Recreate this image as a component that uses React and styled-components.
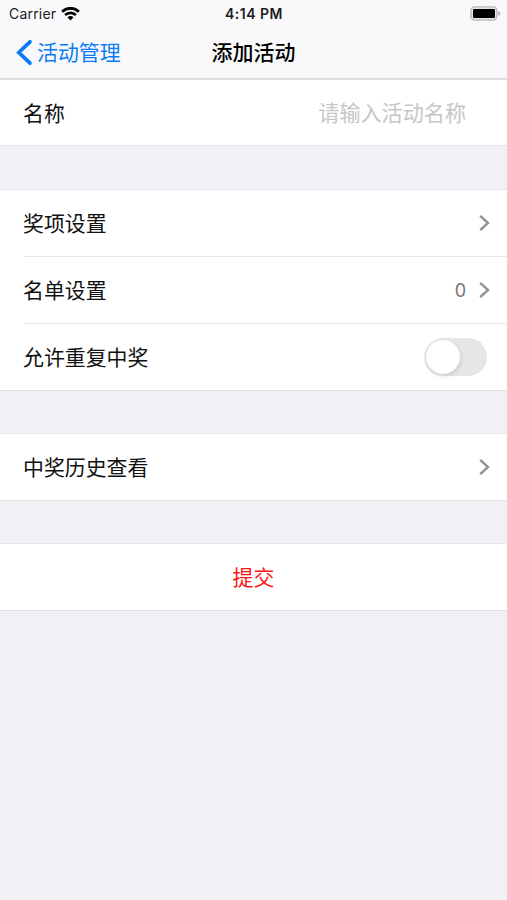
import React from 'react';
import styled, { createGlobalStyle } from 'styled-components';

const GlobalStyle = createGlobalStyle`
  * { box-sizing: border-box; }
  body {
    margin: 0;
    background: #f0f0f5;
    font-family: "Noto Sans CJK SC", sans-serif;
    color: #111;
  }
`;

const Screen = styled.main`
  height: 900px;
  background: #f0f0f5;
  overflow: hidden;
`;

const TopBar = styled.header`
  height: 80px;
  background: #f9f9fb;
  border-bottom: 2px solid #e0e0e3;
`;

const StatusBar = styled.div`
  height: 27px;
  padding: 0 6px 0 9px;
  display: grid;
  grid-template-columns: 1fr 60px 1fr;
  align-items: center;
  color: #1c1c1e;
`;

const Carrier = styled.div`
  display: flex;
  align-items: center;
  gap: 5px;
  font: 400 14px/20px Inter, sans-serif;
  letter-spacing: 0.2px;
`;

const Clock = styled.div`
  font: 600 14px/20px Inter, sans-serif;
  letter-spacing: 0.5px;
  white-space: nowrap;
`;

const BatterySlot = styled.div`
  display: flex;
  justify-content: flex-end;
`;

const NavBar = styled.nav`
  height: 51px;
  padding: 0 16px;
  display: grid;
  grid-template-columns: 1fr auto 1fr;
  align-items: center;
`;

const BackLink = styled.a`
  display: flex;
  align-items: center;
  gap: 4px;
  color: #0a7bf5;
  font-size: 20.9px;
  line-height: 30px;
`;

const BackText = styled.span`
  padding-bottom: 3px;
`;

const Title = styled.h1`
  margin: 0;
  padding-bottom: 3px;
  color: #000;
  font-size: 21px;
  font-weight: 500;
  line-height: 30px;
`;

const Group = styled.section`
  margin-bottom: ${(p) => (p.$first ? '43px' : '42px')};
  background: #fff;
  border-top: ${(p) => (p.$first ? '0' : '1px')} solid #e6e6e9;
  border-bottom: 1px solid #e2e2e5;
`;

const Row = styled.div`
  height: ${(p) => p.$height || 66}px;
  padding: 0 16px 0 23px;
  display: flex;
  align-items: center;
  justify-content: ${(p) => (p.$centered ? 'center' : 'space-between')};
`;

const Divider = styled.div`
  height: 1px;
  margin-left: 25px;
  background: #e6e6e8;
`;

const Label = styled.span`
  padding-bottom: 2px;
  font-size: 20.9px;
  line-height: 30px;
`;

const NameInput = styled.input`
  width: 200px;
  margin: 0 25px 2px 0;
  padding: 0;
  border: 0;
  outline: 0;
  background: transparent;
  text-align: right;
  font: 400 21.1px/30px "Noto Sans CJK SC", sans-serif;
  &::placeholder { color: #c6c6c8; opacity: 1; }
`;

const Trailing = styled.div`
  display: flex;
  align-items: center;
  gap: 13px;
`;

const Count = styled.span`
  padding-top: 1px;
  color: #757577;
  font: 400 18px/26px Inter, sans-serif;
`;

const Toggle = styled.button`
  width: 63px;
  height: 38px;
  margin-right: 4px;
  padding: 2px;
  display: flex;
  border: 0;
  border-radius: 19px;
  background: #e6e6e8;
`;

const Knob = styled.span`
  width: 34px;
  height: 34px;
  border-radius: 50%;
  background: #fff;
  box-shadow: 1px 2px 4px rgba(0, 0, 0, 0.12);
`;

const Submit = styled.button`
  border: 0;
  padding: 0;
  margin: 0 7px 2px 0;
  background: none;
  color: #fa1414;
  font: 400 20.9px/30px "Noto Sans CJK SC", sans-serif;
`;

const WifiIcon = () => (
  <svg width="19" height="14" viewBox="0 0 19 14" fill="none" stroke="#000" strokeWidth="2.7">
    <path d="M1.1 4.7C5.8.2 13.2.2 17.9 4.7" />
    <path d="M4.1 8C7.1 5.1 11.9 5.1 14.9 8" />
    <path d="M6.5 10.3C8.2 8.7 10.8 8.7 12.5 10.3L9.5 13.4Z" fill="#000" stroke="none" />
  </svg>
);

const BatteryIcon = () => (
  <svg width="31" height="15" viewBox="0 0 31 15">
    <rect x="0.9" y="0.9" width="26" height="13.2" rx="4" fill="#e4e4e6" stroke="#b8b8b9" strokeWidth="1.4" />
    <rect x="3" y="3" width="22" height="9" rx="1.3" fill="#000" />
    <path d="M28.4 5.2C30.8 6 30.8 9 28.4 9.8Z" fill="#aaa" />
  </svg>
);

const BackIcon = () => (
  <svg width="17" height="27" viewBox="0 0 17 27" fill="none" stroke="#0a7bf5" strokeWidth="3.7" strokeLinecap="round">
    <path d="M14 2.8L2.8 13.5L14 24.2" />
  </svg>
);

const Chevron = () => (
  <svg width="12" height="18" viewBox="0 0 12 18" fill="none" stroke="#929294" strokeWidth="2.4">
    <path d="M1.2 1.8L9 9L1.2 16.2" />
  </svg>
);

export default function App() {
  return (
    <>
      <GlobalStyle />
      <Screen>
        <TopBar>
          <StatusBar>
            <Carrier>Carrier<WifiIcon /></Carrier>
            <Clock>4:14 PM</Clock>
            <BatterySlot><BatteryIcon /></BatterySlot>
          </StatusBar>
          <NavBar>
            <BackLink><BackIcon /><BackText>活动管理</BackText></BackLink>
            <Title>添加活动</Title>
          </NavBar>
        </TopBar>
        <Group $first>
          <Row $height={65}>
            <Label>名称</Label>
            <NameInput placeholder="请输入活动名称" />
          </Row>
        </Group>
        <Group>
          <Row><Label>奖项设置</Label><Chevron /></Row>
          <Divider />
          <Row>
            <Label>名单设置</Label>
            <Trailing><Count>0</Count><Chevron /></Trailing>
          </Row>
          <Divider />
          <Row>
            <Label>允许重复中奖</Label>
            <Toggle role="switch" aria-checked="false"><Knob /></Toggle>
          </Row>
        </Group>
        <Group>
          <Row><Label>中奖历史查看</Label><Chevron /></Row>
        </Group>
        <Group>
          <Row $centered><Submit>提交</Submit></Row>
        </Group>
      </Screen>
    </>
  );
}
